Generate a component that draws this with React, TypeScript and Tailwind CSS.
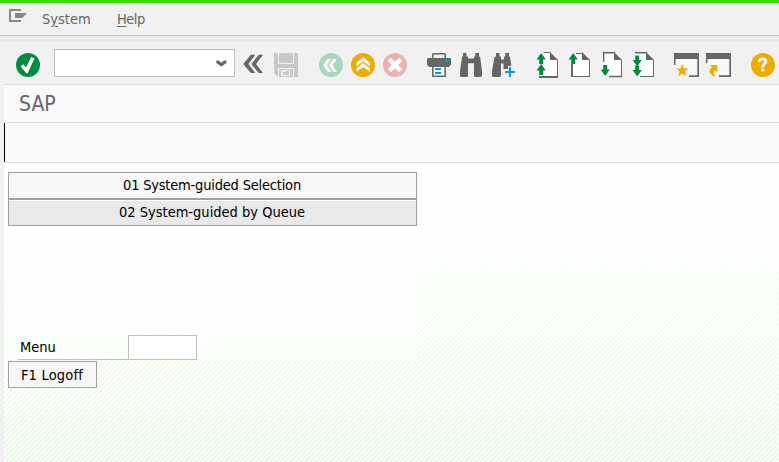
import type { ReactNode } from "react";

function Icon({ children, className = "", w = 24 }: { children: ReactNode; className?: string; w?: number }) {
  return (
    <svg width={w} height="24" viewBox={`0 0 ${w} 24`} className={`block shrink-0 overflow-visible ${className}`}>
      {children}
    </svg>
  );
}

const G = "#666666";
const GREEN = "#008c3c";
const AMBER = "#f0ab00";
const BLUE = "#009de0";

const UP = "M5.2 0L9.8 6.5H7.2V11H3.2V6.5H.6Z";
const DOWN = "M5.2 11L9.8 4.5H7.2V0H3.2V4.5H.6Z";

function Page({ kind }: { kind: "first" | "prev" | "next" | "last" }) {
  return (
    <>
      <path d="M3.5 0H14.5L22 7.5V24H3.5Z" fill="#fff" />
      <path d="M14 -1L22 7H14Z" fill={G} />
      <path d="M21.5 7V23.5" stroke={G} />
      {kind === "first" && (
        <>
          <path d="M7.5 -.5H14.5" stroke={G} />
          <path d="M3 24H22" stroke={G} strokeWidth="2" />
          <path d={UP} fill={GREEN} />
          <path d={UP} fill={GREEN} transform="translate(0 11)" />
        </>
      )}
      {kind === "prev" && (
        <>
          <path d="M8 .5H14.5M3 23.5H22" stroke={G} />
          <path d="M4 11V24" stroke={G} strokeWidth="2" />
          <path d={UP} fill={GREEN} />
        </>
      )}
      {kind === "next" && (
        <>
          <path d="M3 -.3H15" stroke={G} strokeWidth="1.6" />
          <path d="M3.7 0V9" stroke={G} strokeWidth="1.4" />
          <path d="M9 23.5H22" stroke={G} strokeWidth="1.5" />
          <path d={DOWN} fill={GREEN} transform="translate(0 12)" />
        </>
      )}
      {kind === "last" && (
        <>
          <path d="M3 -.3H15" stroke={G} strokeWidth="1.6" />
          <path d="M8 23.5H22" stroke={G} />
          <path d={DOWN} fill={GREEN} transform="translate(0 2.5)" />
          <path d={DOWN} fill={GREEN} transform="translate(0 12.5)" />
        </>
      )}
    </>
  );
}

function Toolbar() {
  return (
    <div className="ml-1 flex h-[44px] items-start border-b border-[#dddddd] bg-[#f1f1f1] pl-3">
      <Icon className="mt-[12px]">
        <circle cx="12" cy="12" r="12" fill={GREEN} />
        <path d="M4.6 13.3L7.3 11.3L10 14.6L15.3 4L18.5 5.5L11.6 20.3H10.3Z" fill="#fff" />
      </Icon>
      <div className="ml-[14px] mt-2 flex h-[28px] w-[181px] items-center justify-end border border-[#bfbfbf] bg-white pr-[7px]">
        <svg width="11" height="7" viewBox="0 0 11 7">
          <path d="M.3 .6H2.7L5.3 2.8L8 .6H10.4V3L5.3 6.6L.3 3Z" fill={G} />
        </svg>
      </div>
      <Icon className="ml-[7px] mt-[12px]">
        <path d="M8.8 1.8H13.3L6.4 11L13.3 20H8.8L1.3 11Z" fill={G} />
        <path d="M16.7 1.8H21L14 11L21 20H16.7L9.4 11Z" fill={G} />
      </Icon>
      <Icon className="ml-2 mt-[12px]">
        <path d="M0 0H24V24H4L0 20Z" fill="#c8c8c8" />
        <path d="M4.5 0V10.5H19.5V0M4.5 24V15.5H19.5V24" fill="none" stroke="#f1f1f1" />
        <path d="M7 17H16V23H7ZM9 19V22H12V19Z" fill="#f1f1f1" fillRule="evenodd" />
        <path d="M12 18H15V22H12Z" fill="#c8c8c8" />
      </Icon>
      <Icon className="ml-[21px] mt-[12px]">
        <circle cx="12" cy="12" r="12" fill="#a9d6bd" />
        <path d="M8.5 6H12L8 12.3L12.5 19H9L4 12.3ZM14.3 6H17.8L13.6 12.3L18 19H14.5L9.8 12.3Z" fill="#fff" />
      </Icon>
      <Icon className="ml-2 mt-[12px]">
        <circle cx="12" cy="12" r="12" fill={AMBER} />
        <path d="M5.5 9.8L12.2 4.3L19 9.8V13.2L12.2 8.3L5.5 13.2ZM5.5 15.3L12.2 10L19 15.3V18.7L12.2 13.9L5.5 18.7Z" fill="#fff" />
      </Icon>
      <Icon className="ml-2 mt-[12px]">
        <circle cx="12" cy="12" r="12" fill="#ebb2b0" />
        <path d="M6.3 6.3L17.7 17.7M17.7 6.3L6.3 17.7" stroke="#fff" strokeWidth="4.5" />
      </Icon>
      <Icon className="ml-5 mt-[12px]">
        <path d="M5.7 5V1.5L6.5 .8H17.5L18.3 1.5V5" fill="none" stroke={G} strokeWidth="1.6" />
        <path d="M1 5H23L24 6V11.5L22 14H2L0 11.5V6Z" fill={G} />
        <path d="M5.8 14V23.2H18.2V14" fill="#fff" stroke={G} strokeWidth="1.6" />
        <path d="M18 7H22V9H18ZM8 15H14V17H8ZM8 19H14V21H8Z" fill={BLUE} />
      </Icon>
      <Icon className="ml-2 mt-[12px]">
        <path d="M4 0H7.5V3.5H9V5.5H15V3.5H16.3V0H20V3.5L21.2 4L23 18V23L22 24H16L15 23V10.3H9V23L8 24H2L1 23V18L3 4L4 3.5Z" fill={G} />
      </Icon>
      <Icon className="ml-2 mt-[12px]">
        <path d="M5 0H8.5V3.5H10V6.5H13V3.5H14.3V0H18V3.5L19 4L20.2 11V13H17V16H12.5V10.5H10V23L9 24H2L1 23V18L3.5 4L5 3.5Z" fill={G} />
        <path d="M19 13V24M13.5 19H24.5" stroke="#f1f1f1" strokeWidth="4" />
        <path d="M19 14V24M14 19H24" stroke={BLUE} strokeWidth="2" />
      </Icon>
      <Icon className="ml-[21px] mt-[12px]"><Page kind="first" /></Icon>
      <Icon className="ml-2 mt-[12px]"><Page kind="prev" /></Icon>
      <Icon className="ml-2 mt-[12px]"><Page kind="next" /></Icon>
      <Icon className="ml-2 mt-[12px]"><Page kind="last" /></Icon>
      <Icon className="ml-[18px] mt-[12px]" w={25}>
        <path d="M1 5H24V23H1Z" fill="#f8f8f8" />
        <path d="M0 0H25V24H15V22.3H23.3V6H1.5V12H0Z" fill={G} />
        <path d="M0 12.5H7V18H14V24H0Z" fill="#f1f1f1" />
        <path d="M8.3 11L10 15.4L14.7 15.5L11 18.5L12.5 23.3L8.3 20.5L4.2 23.3L5.6 18.5L2 15.5L6.7 15.4Z" fill={AMBER} />
      </Icon>
      <Icon className="ml-[7px] mt-[12px]" w={25}>
        <path d="M1 5H24V23H1Z" fill="#f8f8f8" />
        <path d="M0 0H25V24H13V22.3H23.3V6H1.5V10H0Z" fill={G} />
        <path d="M0 10.5H4V23H12V24H0Z" fill="#f1f1f1" />
        <path d="M4 12H11.3V19.3L9 17.2C7.4 18.4 7.2 20 9.2 22.7L8 23.2C3.8 21.5 1.4 18 6 14.2Z" fill={AMBER} />
      </Icon>
      <Icon className="ml-5 mt-[12px]">
        <circle cx="12" cy="12" r="12" fill={AMBER} />
        <path d="M8.2 9.1C8.2 4.6 15.3 5 14.8 8.8C14.5 11.3 11.7 11 11.7 14.4" fill="none" stroke="#fff" strokeWidth="2.8" />
        <rect x="10.2" y="15.7" width="3" height="2.8" fill="#fff" />
      </Icon>
    </div>
  );
}

function Stripes() {
  return (
    <svg className="absolute inset-0 h-full w-full">
      <defs>
        <pattern id="hatch" width="5" height="5" patternUnits="userSpaceOnUse">
          <path d="M-1 1L1 -1M-1 6L6 -1M4 6L6 4" stroke="#e6f8e2" strokeWidth="1.8" />
        </pattern>
        <linearGradient id="fade" x1="0" y1="0" x2="0" y2="1">
          <stop offset="0" stopColor="white" stopOpacity="0" />
          <stop offset=".3" stopColor="white" stopOpacity=".15" />
          <stop offset="1" stopColor="white" stopOpacity="1" />
        </linearGradient>
        <mask id="down"><rect width="100%" height="100%" fill="url(#fade)" /></mask>
      </defs>
      <rect width="100%" height="100%" fill="url(#hatch)" mask="url(#down)" />
    </svg>
  );
}

export default function App() {
  return (
    <div className="flex h-[462px] w-[779px] flex-col overflow-hidden bg-[#f1f1f1] font-['DejaVu_Sans_Condensed','DejaVu_Sans',sans-serif] text-[14.5px] leading-5 text-black">
      <div className="h-[3px] shrink-0 bg-[#35e000]" />
      <div className="flex h-[33px] shrink-0 items-center border-b border-[#c4c4c4] pl-[9px] text-[#666666]">
        <svg width="18" height="13" viewBox="0 0 18 13" className="-mt-[7px]">
          <path d="M12 1H1V12H12" fill="none" stroke="#888" strokeWidth="2" />
          <path d="M6 4H18L13.3 9H6Z" fill="#888" />
        </svg>
        <span className="ml-[15px] w-[75px]">S<span className="underline underline-offset-2">y</span>stem</span>
        <span className="tracking-[-0.5px]"><span className="underline underline-offset-2">H</span>elp</span>
      </div>
      <div className="h-[5px] shrink-0 bg-[#ebebeb]" />
      <Toolbar />
      <div className="ml-1 flex h-[38px] shrink-0 items-center border-b border-[#dddddd] bg-[#f9f9f9] pl-[15px] text-[21px] text-[#666666]">SAP</div>
      <div className="ml-1 h-[40px] shrink-0 border-b border-[#dddddd] bg-[#f9f9f9]">
        <div className="h-full w-px bg-black" />
      </div>
      <main className="relative ml-1 flex-1 bg-[#fefffe]">
        <Stripes />
        <div className="relative ml-1 h-[198px] w-[409px] bg-white/50 pt-[9px]">
          <button className="flex h-[27px] w-full items-center justify-center border border-[#a0a0a0] bg-[#f7f7f7] pr-px pb-px">
            <span className="tracking-[-0.2px]">01 System-guided Selection</span>
          </button>
          <button className="flex h-[27px] w-full items-center justify-center border border-[#a0a0a0] bg-[#e9e9e9] pr-px pb-px shadow-[inset_0_1px_0_#fff]">
            <span>02 System-guided by Queue</span>
          </button>
          <div className="ml-[10px] mt-[109px] flex h-[25px]">
            <label className="flex w-[110px] items-center border-b border-[#bfbfbf] pl-[2px]">Menu</label>
            <div className="w-[69px] border border-[#bfbfbf] bg-white" />
          </div>
        </div>
        <button className="relative ml-1 flex h-[27px] w-[89px] items-center justify-center border border-[#a0a0a0] bg-[#f7f7f7] pr-px tracking-[0.2px]">F1 Logoff</button>
      </main>
    </div>
  );
}
